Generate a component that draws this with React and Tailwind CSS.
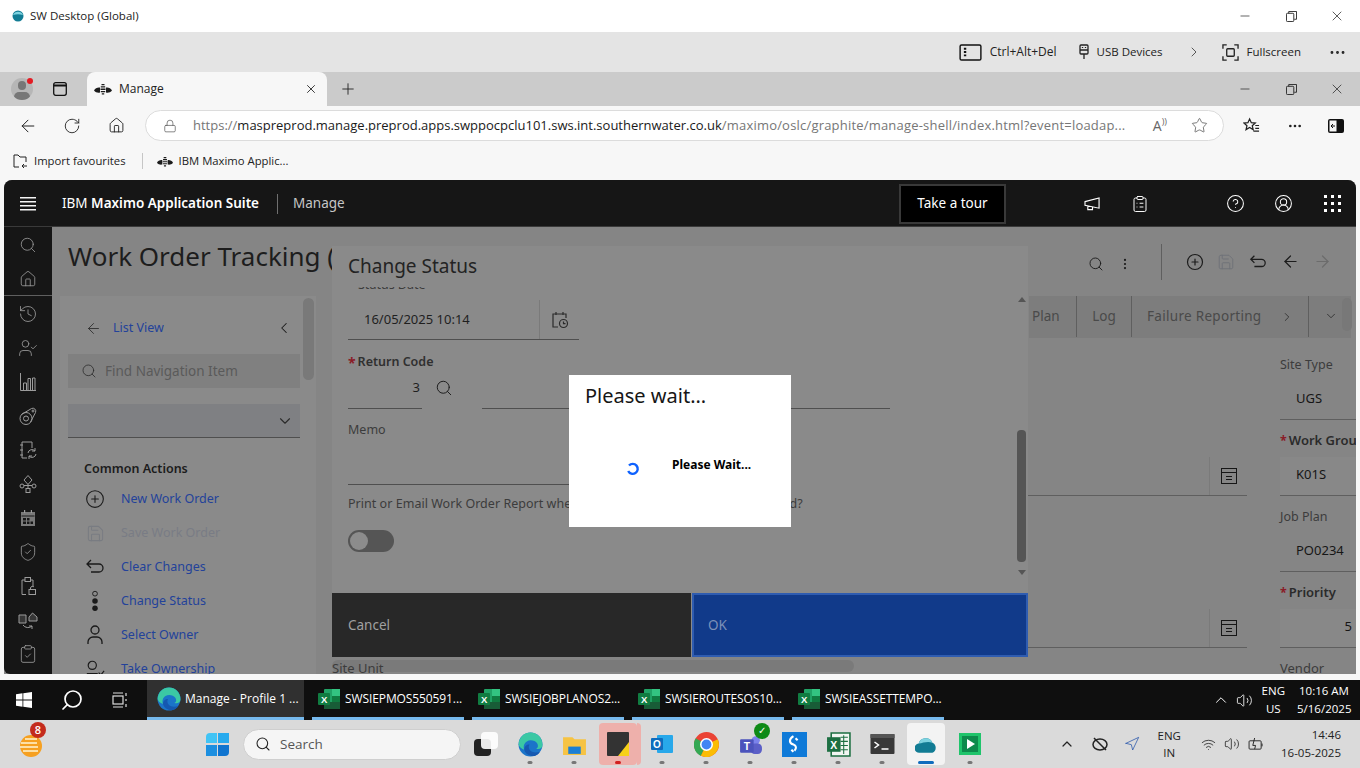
import {
  ArrowLeft, ArrowRight, ChevronDown, ChevronLeft, ChevronRight, ChevronUp, CircleHelp,
  CirclePlus, CircleUserRound, ClipboardCheck, ClipboardList, Ellipsis, EllipsisVertical,
  History, House, Lock, Minus, Navigation, Plus, RotateCw, Save, Search, ShieldCheck,
  Star, UserCheck, Volume2, Wifi, X,
} from "lucide-react";

const UI = "font-['Noto_Sans',sans-serif]";
const SEGOE = "font-['Open_Sans',sans-serif]";

const SIDE_ICONS = [History, UserCheck, BarsIcon, TargetIcon, SyncIcon, TreeIcon, CalIcon, ShieldCheck, ClipLockIcon, SwapIcon, ClipboardCheck];

const ACTIONS = [
  { label: "New Work Order", Icon: CirclePlus, size: 20 },
  { label: "Save Work Order", Icon: Save, size: 19, off: true },
  { label: "Clear Changes", Icon: UndoLong, size: 20 },
  { label: "Change Status", Icon: DotsStatus, size: 22 },
  { label: "Select Owner", Icon: OwnerIcon, size: 22 },
  { label: "Take Ownership", Icon: TakeIcon, size: 22 },
];

const EXCEL_ITEMS = ["SWSIEPMOS550591...", "SWSIEJOBPLANOS2...", "SWSIEROUTESOS10...", "SWSIEASSETTEMPO..."];

function BarsIcon(p) {
  return (
    <svg viewBox="0 0 20 20" fill="none" stroke="currentColor" strokeWidth="1" {...p}>
      <path d="M2.500 1v17.500H18M5.500 18v-7h3v7M10 18V6.500h2.500V18M14.500 18V6H17v12" />
    </svg>
  );
}
function TargetIcon(p) {
  return (
    <svg viewBox="0 0 20 20" fill="none" stroke="currentColor" strokeWidth="1" {...p}>
      <circle cx="8" cy="12.500" r="6" /><circle cx="8" cy="12.500" r="2.500" />
      <path d="M3.500 8.500L13.500 2.500a3 3 0 0 1 4 4L12.500 16" /><circle cx="15" cy="5" r="1" />
    </svg>
  );
}
function SyncIcon(p) {
  return (
    <svg viewBox="0 0 20 20" fill="none" stroke="currentColor" strokeWidth="1" {...p}>
      <path d="M9 18H4V2h10v6M2 5h3M2 10h3M2 15h3" /><path d="M10 13a4 4 0 0 1 7-2M18 14a4 4 0 0 1-7 2M17 8v3h-3M11 19v-3h3" />
    </svg>
  );
}
function TreeIcon(p) {
  return (
    <svg viewBox="0 0 20 20" fill="none" stroke="currentColor" strokeWidth="1" {...p}>
      <path d="M10 1.500L14 6l-4 4.500L6 6zM10 10.500v4" /><circle cx="4" cy="12" r="2" /><circle cx="16" cy="12" r="2" /><rect x="8" y="14.500" width="4" height="4" /><path d="M6 11.500h8" />
    </svg>
  );
}
function CalIcon(p) {
  return (
    <svg viewBox="0 0 20 20" fill="currentColor" {...p}>
      <path d="M3 4h14v14H3z" fillOpacity=".75" /><path d="M6 2h1.200v3H6zM12.800 2h1.200v3h-1.200z" />
      <path d="M3.500 7.500h13v1h-13zM5 10h3v2.500H5zM9 10h2.500v2.500H9zM5 13.500h3V16H5zM9 13.500h2.500V16H9zM12.500 13.500H15V16h-2.500z" fill="#161616" />
    </svg>
  );
}
function ClipLockIcon(p) {
  return (
    <svg viewBox="0 0 20 20" fill="none" stroke="currentColor" strokeWidth="1" {...p}>
      <path d="M8 18.500H4V4h3M12.500 4H15v6" /><rect x="7" y="1.500" width="5.500" height="4" />
      <rect x="11" y="13.500" width="6.500" height="5" /><path d="M12.500 13.500V12a2 2 0 0 1 3.500-1" />
    </svg>
  );
}
function SwapIcon(p) {
  return (
    <svg viewBox="0 0 20 20" fill="none" stroke="currentColor" strokeWidth="1" {...p}>
      <path d="M11 7l3.500-4L19 7v4h-8zM1 5h7v8H1z" fill="currentColor" fillOpacity=".25" /><path d="M5 15a6 6 0 0 0 9 1M14 19v-3h-3" />
    </svg>
  );
}
function UndoLong(p) {
  return (
    <svg viewBox="0 0 20 20" fill="none" stroke="currentColor" strokeWidth="1.400" {...p}>
      <path d="M6 3L2 7l4 4M2 7h12a4 4 0 0 1 0 8H6" />
    </svg>
  );
}
function DotsStatus(p) {
  return (
    <svg viewBox="0 0 20 24" {...p}>
      <circle cx="10" cy="4" r="2.600" fill="none" stroke="currentColor" strokeWidth="1" />
      <circle cx="10" cy="12" r="3" fill="currentColor" />
      <circle cx="10" cy="20" r="3" fill="currentColor" />
    </svg>
  );
}
function OwnerIcon(p) {
  return (
    <svg viewBox="0 0 20 20" fill="none" stroke="currentColor" strokeWidth="1.400" {...p}>
      <circle cx="10" cy="5" r="4" /><path d="M3 19v-2a5 5 0 0 1 5-5h4a5 5 0 0 1 5 5v2" />
    </svg>
  );
}
function TakeIcon(p) {
  return (
    <svg viewBox="0 0 22 20" fill="none" stroke="currentColor" strokeWidth="1.300" {...p}>
      <circle cx="8" cy="6" r="4.500" /><path d="M2 15h12M15 14l2.500 2.500L21 12" />
    </svg>
  );
}
function Bee({ className }) {
  return (
    <svg viewBox="0 0 18 12" className={className} fill="#1c1c1c">
      <path d="M0 7.500C1 5 4 4 6 4.500v5C4 10 1.500 9.500 0 7.500zM18 7.500C17 5 14 4 12 4.500v5c2 .5 4.500 0 6-2z" />
      <path d="M7.500 1h3v1.300h-3zM6.800 3.300h4.400v1.300H6.800zM6.500 5.600h5v1.300h-5zM6.800 7.900h4.400v1.300H6.800zM7.800 10.200h2.400v1.300H7.800z" />
    </svg>
  );
}
function ArchiveIcon() {
  return (
    <svg viewBox="0 0 16 16" className="w-4 h-4" fill="none" stroke="#161616" strokeWidth="1">
      <rect x=".5" y=".5" width="15" height="15" /><path d="M.5 4.500h15M5 8.500h6M5 11.500h6" />
    </svg>
  );
}
function CalClock() {
  return (
    <svg viewBox="0 0 18 18" className="w-[18px] h-[18px]" fill="none" stroke="#2b2b2b" strokeWidth="1.200">
      <path d="M7 16H2V3h13v4M5 1v3M12 1v3" /><circle cx="12.500" cy="12.500" r="4" /><path d="M12.500 10.500v2.200h2" />
    </svg>
  );
}
function ExcelIcon({ className = "w-6 h-6" }) {
  return (
    <svg viewBox="0 0 24 24" className={className}>
      <rect x="7" y="2" width="16" height="20" rx="1" fill="#21a366" />
      <rect x="15" y="2" width="8" height="7" fill="#33c481" />
      <rect x="15" y="9" width="8" height="6" fill="#107c41" />
      <rect x="7" y="15" width="16" height="7" fill="#185c37" />
      <rect x="1" y="6" width="12" height="12" rx="1" fill="#107c41" />
      <text x="7" y="15.500" textAnchor="middle" fontSize="9.500" fontWeight="700" fill="#fff" fontFamily="Liberation Sans">X</text>
    </svg>
  );
}
function EdgeIcon({ className = "w-6 h-6" }) {
  return (
    <svg viewBox="0 0 24 24" className={className}>
      <circle cx="12" cy="12" r="11.500" fill="#1b74c9" />
      <path d="M.6 12C1 5 6 .5 12 .5S23.500 5 23.500 12.500c0 3-3 4.500-6 3.500 2-1 2-3 1-5-2-3-7-4-10-2S5 14 6 17C3 16 1 14 .6 12z" fill="#3bc8a4" />
      <path d="M6 17c1 4 5 6.500 10 6 2-.5 4-2 5-4-3 1-7 1-9-1s-2-4-1-6c-3 0-5 2-5 5z" fill="#1558b0" />
    </svg>
  );
}
function WinControls({ className }) {
  return (
    <div className={`flex items-center text-[#222] ${className}`}>
      <Minus size={14} strokeWidth={1.2} className="mr-[34px]" />
      <svg viewBox="0 0 12 12" className="w-[11px] h-[11px] mr-[32px]" fill="none" stroke="#222" strokeWidth="1">
        <rect x=".5" y="2.500" width="8" height="9" rx="1" /><path d="M3 2.500V.5h8.500V9H9" />
      </svg>
      <X size={16} strokeWidth={1.1} />
    </div>
  );
}
function TaskIcon({ children, dot, className = "" }) {
  return (
    <div className={`relative w-[38px] h-[42px] flex items-center justify-center rounded ${className}`}>
      {children}
      {dot && <span className={`absolute bottom-[1px] left-1/2 -translate-x-1/2 rounded-full ${dot}`} />}
    </div>
  );
}
const GREY_DOT = "w-[5px] h-[3px] bg-[#777]";

function FormField({ label, value, req, right, light }) {
  return (
    <div className="h-[76px] flex flex-col shrink-0">
      <div className="h-[37px] pt-[5px] flex items-center text-[12.5px] text-[#3c3c3c] whitespace-nowrap">
        {req && <span className="text-[#8a1c28] mr-[2px] font-bold">*</span>}
        <span className={req ? "font-semibold text-[13px] text-[#2b2b2b]" : ""}>{label}</span>
      </div>
      <div className={`h-[39px] border-b border-[#5f5f5f] flex items-center text-[13px] text-[#161616] ${light ? "bg-[#888888]" : ""} ${right ? "justify-end pr-[4px] pb-[2px]" : "pl-[16px] pb-[2px]"}`}>
        {value}
      </div>
    </div>
  );
}

function LookupLine() {
  return (
    <div className="h-[76px] flex flex-col justify-end">
      <div className="h-[39px] border-b border-[#5f5f5f] flex justify-end">
        <div className="w-[38px] border-l border-[#7a7a7a] flex items-center justify-center"><ArchiveIcon /></div>
      </div>
    </div>
  );
}

function Header() {
  return (
    <div className={`${UI} h-[47px] bg-[#161616] border-b border-[#3a3a3a] flex items-center text-white shrink-0 relative pt-[1px]`}>
      <div className="w-[48px] flex justify-center">
        <svg viewBox="0 0 16 14" className="w-4 h-[14px]" fill="#f4f4f4"><path d="M0 0h16v1.500H0zM0 4h16v1.500H0zM0 8h16v1.500H0zM0 12h16v1.500H0z" /></svg>
      </div>
      <div className="ml-[10px] text-[13.5px] w-[215px] whitespace-nowrap">IBM <span className="font-semibold">Maximo Application Suite</span></div>
      <div className="w-px h-5 bg-[#6f6f6f]" />
      <div className="ml-[15px] text-[13.5px] text-[#c6c6c6]">Manage</div>
      <div className="ml-auto flex items-center">
        <div className="w-[107px] h-10 bg-black border-2 border-[#393939] flex items-center justify-center text-[13.5px] mr-[78px]">Take a tour</div>
        <svg viewBox="0 0 18 16" className="w-[17px] h-[15px] mr-[30px]" fill="none" stroke="#fff" strokeWidth="1.200">
          <path d="M1 6l15-4v11L1 10zM4 11v3.500h5V12" />
        </svg>
        <ClipboardList size={18} strokeWidth={1.3} className="mr-[77px]" />
        <CircleHelp size={19} strokeWidth={1.3} className="mr-[29px]" />
        <CircleUserRound size={19} strokeWidth={1.3} className="mr-[31px]" />
        <div className="grid grid-cols-3 gap-[4px] mr-[15px]">
          {Array.from({ length: 9 }).map((_, i) => <span key={i} className="w-[3px] h-[3px] bg-white" />)}
        </div>
      </div>
    </div>
  );
}

function Sidebar() {
  return (
    <div className="w-[48px] shrink-0 bg-[#161616] text-[#9c9c9c] flex flex-col items-center overflow-hidden rounded-bl-md">
      <div className="w-full h-[69px] border-b border-[#5f5f5f] flex flex-col items-center pt-[9px] gap-[16px] shrink-0">
        <Search size={18} strokeWidth={1.1} />
        <House size={18} strokeWidth={1.1} />
      </div>
      <div className="flex flex-col items-center gap-[14px] pt-[8px]">
        {SIDE_ICONS.map((Ic, i) => <Ic key={i} width={20} height={20} size={20} strokeWidth={1} />)}
      </div>
    </div>
  );
}

function NavPanel() {
  return (
    <div className="w-[256px] ml-[8px] bg-[#8a8a8a] shrink-0 relative overflow-hidden pl-[8px] pr-[16px]">
      <div className="absolute right-[2px] top-[2px] w-[11px] h-[82px] rounded-md bg-[#797979]" />
      <div className="h-[58px] pt-[6px] flex items-center pl-[17px] text-[#23429a] text-[12.5px]">
        <ArrowLeft size={17} strokeWidth={1.2} className="text-[#2b2b2b] mr-[11px]" />
        List View
        <ChevronLeft size={18} strokeWidth={1.4} className="text-[#1c1c1c] ml-auto mr-[7px]" />
      </div>
      <div className="h-[34px] bg-[#808080] flex items-center pl-[13px] text-[#5a5a5a] text-[13.5px]">
        <Search size={16} strokeWidth={1.2} className="text-[#2b2b2b] mr-[8px]" />
        Find Navigation Item
      </div>
      <div className="h-[34px] mt-[16px] bg-[#7f8083] border-b border-[#4f4f4f] flex items-center justify-end pr-[6px]">
        <ChevronDown size={18} strokeWidth={1.5} className="text-[#2b2b2b]" />
      </div>
      <div className="pt-[22px] pl-[16px] text-[12.5px] font-semibold text-[#1c1c1c] h-[44px]">Common Actions</div>
      <div className="flex flex-col pl-[17px]">
        {ACTIONS.map(({ label, Icon, size, off }) => (
          <div key={label} className="h-[34px] flex items-center shrink-0">
            <div className={`w-[20px] flex justify-center mr-[16px] ${off ? "text-[#797c82]" : "text-[#1a1a1a]"}`}>
              <Icon width={size} height={size} size={size} strokeWidth={1.3} />
            </div>
            <span className={`text-[12.5px] whitespace-nowrap ${off ? "text-[#797c85]" : "text-[#23429a]"}`}>{label}</span>
          </div>
        ))}
      </div>
    </div>
  );
}

function WorkArea() {
  return (
    <div className="flex-1 min-w-0 flex flex-col overflow-hidden">
      <div className="h-[42px] shrink-0 flex justify-end pr-[5px] relative">
        <div className="flex items-stretch bg-[#7d7d7d] text-[#4a4a4a] text-[13.5px] pb-[1px]">
          <div className="w-[48px] border-r border-[#5f5f5f] flex items-center pl-[3px]">Plan</div>
          <div className="w-[55px] border-r border-[#5f5f5f] flex items-center justify-center">Log</div>
          <div className="w-[177px] border-r border-[#5f5f5f] flex items-center pl-[15px] tracking-[.3px] whitespace-nowrap">
            Failure Reporting
            <ChevronRight size={14} strokeWidth={1.3} className="ml-auto mr-[14px] text-[#222]" />
          </div>
          <div className="w-[42px] flex items-start pt-[13px] pl-[15px]">
            <ChevronDown size={14} strokeWidth={1.3} className="text-[#222]" />
          </div>
        </div>
        <div className="absolute right-[4px] top-[2px] w-[10px] h-[33px] rounded-md bg-[#787878]" />
      </div>
      <div className="flex pl-[16px] pt-[6px]">
        <div className="w-[915px] shrink-0 flex flex-col">
          <div className="h-[76px]" />
          <LookupLine />
          <div className="h-[76px]" />
          <LookupLine />
          <div className="relative z-10 text-[13px] text-[#3c3c3c] pt-[11px]">Site Unit</div>
        </div>
        <div className="ml-[33px] w-[76px] shrink-0 flex flex-col">
          <FormField label="Site Type" value="UGS" />
          <FormField label="Work Group" value="K01S" req light />
          <FormField label="Job Plan" value="PO0234" />
          <FormField label="Priority" value="5" req right light />
          <div className="text-[13px] text-[#3c3c3c] pt-[11px]">Vendor</div>
        </div>
      </div>
    </div>
  );
}

function ChangeStatusModal() {
  return (
    <div className="absolute left-[328px] top-[19px] w-[696px] h-[411px] bg-[#8a8a8a] flex flex-col">
      <div className="h-[41px] shrink-0 pl-4 flex items-center text-[19px] text-[#232323] relative z-10 bg-[#8a8a8a]">Change Status</div>
      <div className="flex-1 min-h-0 overflow-hidden relative pl-4">
        <div className="text-[12.5px] text-[#3c3c3c] -mt-[11px] h-[24px] ml-[10px]">Status Date</div>
        <div className="w-[231px] h-[40px] border-b border-[#4f4f4f] flex items-center">
          <div className="w-[192px] h-full border-r border-[#7a7a7a] pl-4 flex items-center text-[13px] text-[#1f1f1f]">16/05/2025 10:14</div>
          <div className="flex-1 flex justify-center"><CalClock /></div>
        </div>
        <div className="mt-[12px] text-[12.5px] font-semibold text-[#303030] h-[20px] flex items-center">
          <span className="text-[#8a1c28] mr-[2px] text-[14px] font-bold">*</span>Return Code
        </div>
        <div className="flex h-[37px]">
          <div className="w-[74px] border-b border-[#4f4f4f] flex items-center justify-end pr-[2px] pb-[5px] text-[13px] text-[#1f1f1f]">3</div>
          <div className="w-[60px] flex items-center pl-[13px] pb-[5px]"><Search size={18} strokeWidth={1.3} className="text-[#1c1c1c]" /></div>
          <div className="w-[408px] border-b border-[#4f4f4f]" />
        </div>
        <div className="mt-[12px] text-[12.5px] text-[#3c3c3c] h-[64px] w-[400px] border-b border-[#4f4f4f]">Memo</div>
        <div className="mt-[10px] text-[12.5px] text-[#3c3c3c] whitespace-nowrap tracking-[.03px]">Print or Email Work Order Report when Work Order Status is Set to Changed?</div>
        <div className="mt-[16px] w-[46px] h-[22px] rounded-full bg-[#555] p-[2px]">
          <div className="w-[18px] h-[18px] rounded-full bg-[#8c8c8c]" />
        </div>
        {/* modal scrollbar */}
        <div className="absolute right-[2px] top-0 bottom-0 w-[9px] flex flex-col items-center">
          <span className="mt-[10px] w-0 h-0 border-x-[4px] border-x-transparent border-b-[5px] border-b-[#555]" />
          <div className="mt-[128px] w-[9px] h-[132px] rounded bg-[#555]" />
          <span className="mt-[8px] w-0 h-0 border-x-[4px] border-x-transparent border-t-[5px] border-t-[#555]" />
        </div>
      </div>
      <div className="h-[64px] shrink-0 flex">
        <div className="w-[359px] bg-[#282828] text-[#a0a0a0] text-[13.5px] flex items-center pl-4 mr-[1px]">Cancel</div>
        <div className="flex-1 bg-[#113a8a] border-2 border-[#2f5cb0] text-[#7d90b8] text-[13.5px] flex items-center pl-[14px]">OK</div>
      </div>
    </div>
  );
}

function WaitDialog() {
  return (
    <div className="absolute left-[565px] top-[148px] w-[222px] h-[152px] bg-white">
      <div className="pl-4 pt-[9px] text-[20px] leading-6 text-[#161616]">Please wait...</div>
      <div className="flex mt-[49px]">
        <svg viewBox="0 0 14 14" className="ml-[57px] mt-[5px] w-[14px] h-[14px]" fill="none" stroke="#0f62fe" strokeWidth="2.400">
          <path d="M3 3.500A5 5 0 1 1 2.200 9" />
        </svg>
        <div className="ml-[32px] text-[12px] font-bold text-black leading-4">Please Wait...</div>
      </div>
    </div>
  );
}

function MainApp() {
  return (
    <div className="h-[494px] mx-[4px] rounded-t-lg overflow-hidden flex flex-col bg-[#858585] shrink-0">
      <Header />
      <div className={`${UI} flex-1 min-h-0 flex relative overflow-hidden`}>
        <Sidebar />
        <div className="flex-1 min-w-0 flex flex-col">
          <div className="h-[69px] shrink-0 flex items-center pl-[16px] text-[#1d1d1d]">
            <span className="text-[26px] whitespace-nowrap pb-[10px]">Work Order Tracking (</span>
            <div className="ml-auto flex items-center text-[#1c1c1c] h-[36px]">
              <Search size={16} strokeWidth={1.4} className="mr-[14px] mt-[4px]" />
              <EllipsisVertical size={14} strokeWidth={1.8} className="mr-[29px] mt-[4px]" />
              <div className="w-px h-[36px] bg-[#5f5f5f] mr-[24px]" />
              <CirclePlus size={18} strokeWidth={1.6} className="mr-[13px]" />
              <Save size={18} strokeWidth={1.3} className="mr-[14px] text-[#6f7278]" />
              <UndoLong width={18} height={18} className="mr-[14px]" />
              <ArrowLeft size={19} strokeWidth={1.5} className="mr-[13px]" />
              <ArrowRight size={19} strokeWidth={1.5} className="mr-[24px] text-[#6c6c6c]" />
            </div>
          </div>
          <div className="flex-1 min-h-0 flex">
            <NavPanel />
            <WorkArea />
          </div>
        </div>
        <div className="absolute left-[328px] right-[502px] bottom-[2px] h-[12px] rounded-md bg-[#7a7a7a]" />
        <ChangeStatusModal />
        <WaitDialog />
      </div>
    </div>
  );
}

function RemoteTaskbar() {
  return (
    <div className={`${SEGOE} h-[40px] bg-[#0f0f0f] flex items-stretch text-white shrink-0`}>
      <div className="w-[48px] flex items-center justify-center">
        <svg viewBox="0 0 16 16" className="w-4 h-4" fill="#fff"><path d="M0 2.200l6.500-.9v6.300H0zM7.300 1.200L16 0v7.600H7.300zM0 8.400h6.500v6.300L0 13.800zM7.300 8.400H16V16l-8.700-1.200z" /></svg>
      </div>
      <div className="w-[48px] flex items-center justify-center"><Search size={24} strokeWidth={1.7} className="-scale-x-100" /></div>
      <div className="w-[48px] flex items-center justify-center">
        <svg viewBox="0 0 18 18" className="w-[18px] h-[18px]" fill="none" stroke="#ddd" strokeWidth="1.200"><rect x="2" y="5" width="10" height="8" /><path d="M2 2h10M2 16h10M15 2v3M15 8v2M15 13v3" /></svg>
      </div>
      <div className="ml-[3px] w-[157px] bg-[#303030] border-b-[3px] border-[#76b9ed] flex items-center pl-[10px] text-[12px] pt-[1px]">
        <EdgeIcon /><span className="ml-[4px] whitespace-nowrap">Manage - Profile 1 ...</span>
      </div>
      {EXCEL_ITEMS.map((t) => (
        <div key={t} className="ml-[8px] w-[152px] border-b-[3px] border-[#76b9ed] flex items-center pl-[5px] text-[12px] tracking-[-.1px] pt-[1px]">
          <ExcelIcon /><span className="ml-[4px] whitespace-nowrap">{t}</span>
        </div>
      ))}
      <div className="ml-auto flex items-center pr-[9px]">
        <ChevronUp size={18} strokeWidth={1.3} className="mr-[6px]" />
        <Volume2 size={17} strokeWidth={1.2} className="mr-[9px]" />
        <div className="text-[11.5px] leading-[18px] text-center mr-[12px]">ENG<br />US</div>
        <div className="text-[11.5px] leading-[18px] text-center w-[54px]">10:16 AM<br />5/16/2025</div>
      </div>
    </div>
  );
}

function LocalTaskbar() {
  return (
    <div className={`${SEGOE} h-[48px] bg-[#dadada] flex items-center shrink-0 relative text-[#222]`}>
      <div className="ml-[20px] relative w-[24px] h-[26px]">
        <svg viewBox="0 0 22 26" className="absolute left-0 top-[3px] w-[22px] h-[26px]"><circle cx="11" cy="12" r="11" fill="#f6a020" /><path d="M1 9h16M0 13h18M3 17h15M5 5h12" stroke="#fff3d0" strokeWidth="1.300" /></svg>
        <span className="absolute -top-[9px] left-[10px] w-[16px] h-[16px] rounded-full bg-[#c42b1c] text-white text-[11px] font-semibold flex items-center justify-center">8</span>
      </div>
      <div className="ml-[162px] w-[23px] h-[23px] grid grid-cols-2 gap-[1.5px]">
        <span className="bg-[#41c4f5] rounded-tl-sm" /><span className="bg-[#27aaee]" /><span className="bg-[#1c8fe0]" /><span className="bg-[#0f74cf] rounded-br-sm" />
      </div>
      <div className="ml-[14px] w-[218px] h-[31px] rounded-full bg-[#f5f5f5] border border-[#cfcfcf] flex items-center pl-[11px] text-[13.5px] text-[#555]">
        <Search size={16} strokeWidth={1.6} className="text-[#222] mr-[9px]" />Search
      </div>
      <div className="ml-[6px] flex items-center gap-[6px]">
        <TaskIcon>
          <div className="relative w-[24px] h-[24px]">
            <span className="absolute left-0 bottom-0 w-[17px] h-[17px] bg-[#222] rounded-sm" />
            <span className="absolute right-0 top-0 w-[17px] h-[17px] bg-white/90 rounded-sm" />
          </div>
        </TaskIcon>
        <TaskIcon dot={GREY_DOT}><EdgeIcon className="w-[25px] h-[25px]" /></TaskIcon>
        <TaskIcon dot={GREY_DOT}>
          <svg viewBox="0 0 24 24" className="w-[25px] h-[25px]"><path d="M1 5h9l2 2h11v15H1z" fill="#f6c343" /><rect x="6" y="14" width="12" height="7" fill="#1b7fd4" /></svg>
        </TaskIcon>
        <TaskIcon className="bg-[#eeb0ab]" dot="w-[6px] h-[3px] bg-[#d12020]">
          <svg viewBox="0 0 22 24" className="w-[22px] h-[24px]"><rect width="22" height="24" rx="1" fill="#333" /><path d="M22 10v14H11z" fill="#f7d117" /></svg>
          <span className="absolute right-[-4px] top-0 bottom-0 w-[4px] bg-[#eeb0ab] rounded-r" />
        </TaskIcon>
        <TaskIcon dot={GREY_DOT}>
          <svg viewBox="0 0 24 24" className="w-6 h-6"><rect x="7" y="3" width="16" height="18" rx="1" fill="#28a8ea" /><rect x="1" y="6" width="12" height="12" rx="1" fill="#0f6cbd" /><text x="7" y="15.500" textAnchor="middle" fontSize="10" fontWeight="700" fill="#fff" fontFamily="Liberation Sans">O</text></svg>
        </TaskIcon>
        <TaskIcon dot={GREY_DOT}>
          <svg viewBox="0 0 24 24" className="w-[25px] h-[25px]"><circle cx="12" cy="12" r="12" fill="#ea4335" /><path d="M12 12L1.600 6a12 12 0 0 0 5 17z" fill="#34a853" /><path d="M12 12l10.800-5A12 12 0 0 1 6.600 22.800z" fill="#fbbc04" /><circle cx="12" cy="12" r="5.500" fill="#4285f4" stroke="#fff" strokeWidth="1.500" /></svg>
        </TaskIcon>
        <TaskIcon dot={GREY_DOT}>
          <div className="relative">
            <svg viewBox="0 0 24 24" className="w-[25px] h-[25px]"><circle cx="17" cy="8" r="4" fill="#7b83eb" /><rect x="12" y="11" width="11" height="10" rx="4" fill="#5b5fc7" /><rect x="2" y="7" width="13" height="13" rx="1" fill="#4b53bc" /><text x="8.500" y="17" textAnchor="middle" fontSize="10" fontWeight="700" fill="#fff" fontFamily="Liberation Sans">T</text></svg>
            <span className="absolute -top-[9px] right-[-7px] w-4 h-4 rounded-full bg-[#0e8a16] text-white text-[10px] flex items-center justify-center">✓</span>
          </div>
        </TaskIcon>
        <TaskIcon dot={GREY_DOT}>
          <svg viewBox="0 0 24 24" className="w-[25px] h-[25px]"><rect width="24" height="24" fill="#0f7ad8" /><path d="M11 4C6 7 7 11 11 12c3 1 3 4 1 6M13 6l2 2M9 17l2 2" stroke="#fff" strokeWidth="2" fill="none" /></svg>
        </TaskIcon>
        <TaskIcon dot={GREY_DOT}>
          <svg viewBox="0 0 24 24" className="w-[25px] h-[25px]"><path d="M5 1h18v22H5z" fill="#f2f6f2" stroke="#1d6f42" strokeWidth="1.500" /><path d="M14 5h7M14 9h7M14 13h7M14 17h7M17 3v18" stroke="#1d6f42" /><rect x="1" y="5" width="13" height="14" fill="#1d6f42" /><text x="7.500" y="16" textAnchor="middle" fontSize="10" fontWeight="700" fill="#fff" fontFamily="Liberation Sans">X</text></svg>
        </TaskIcon>
        <TaskIcon dot={GREY_DOT}>
          <svg viewBox="0 0 24 20" className="w-[25px] h-[20px]"><rect width="24" height="20" rx="1" fill="#383838" /><rect width="24" height="4" fill="#555" /><path d="M4 8l4 3-4 3" stroke="#fff" strokeWidth="1.500" fill="none" /><path d="M11 15h7" stroke="#fff" strokeWidth="1.500" /></svg>
        </TaskIcon>
        <TaskIcon className="bg-[#f3f3f3]" dot="w-[16px] h-[3px] bg-[#0f6cbd]">
          <svg viewBox="0 0 24 18" className="w-[22px] h-[17px]"><path d="M5 18a5 5 0 0 1-1-10 8 8 0 0 1 15-1 6 6 0 0 1 0 11z" fill="#127c94" /><path d="M4 8a8 8 0 0 1 15-1c-5-2-10 0-15 1z" fill="#7ed3e0" /></svg>
        </TaskIcon>
        <TaskIcon dot={GREY_DOT}>
          <svg viewBox="0 0 24 24" className="w-6 h-6"><rect x="1" y="1" width="22" height="22" fill="#1fc46b" /><rect x="4" y="4" width="16" height="16" fill="#0d8a4c" /><path d="M9 7l8 5-8 5z" fill="#fff" /></svg>
        </TaskIcon>
      </div>
      <div className="ml-auto flex items-center pr-[19px]">
        <ChevronUp size={16} strokeWidth={1.8} className="mr-[17px]" />
        <svg viewBox="0 0 16 16" className="w-4 h-4 mr-[16px]" fill="none" stroke="#222" strokeWidth="1.500">
          <ellipse cx="8" cy="8.500" rx="7" ry="5.500" /><path d="M2 2l12 12" />
        </svg>
        <Navigation size={16} strokeWidth={1.1} className="mr-[18px] text-[#1f4fa8]" />
        <div className="text-[11.5px] leading-[17px] text-center mr-[20px]">ENG<br />IN</div>
        <Wifi size={15} strokeWidth={1.3} className="mr-[8px]" />
        <Volume2 size={16} strokeWidth={1.2} className="mr-[8px]" />
        <svg viewBox="0 0 18 14" className="w-[17px] h-[13px] mr-[16px]" fill="none" stroke="#222"><rect x="1" y="3" width="13" height="9" rx="1" /><path d="M15 6v3M7 0L5 8h3l-1 4" /></svg>
        <div className="text-[11.5px] leading-[18px] text-right">14:46<br />16-05-2025</div>
      </div>
    </div>
  );
}

export default function App() {
  return (
    <div className={`${SEGOE} w-[1360px] h-[768px] overflow-hidden flex flex-col bg-[#f7f7f7]`}>
      {/* citrix title bar */}
      <div className="h-[32px] bg-white flex items-center shrink-0">
        <svg viewBox="0 0 14 12" className="w-[14px] h-[12px] ml-[11px]"><circle cx="7" cy="6" r="5.500" fill="#127c94" /><path d="M2 5a5.500 5.500 0 0 1 10 0c-3-1-7-1-10 0z" fill="#7ed3e0" /></svg>
        <span className="ml-[5px] text-[11.5px] text-[#222]">SW Desktop (Global)</span>
        <WinControls className="ml-auto mr-[15px]" />
      </div>
      <div className="h-[40px] bg-[#e4e4e4] flex items-center justify-end text-[11.5px] text-[#222] shrink-0">
        <svg viewBox="0 0 24 18" className="w-[23px] h-[17px] mr-[8px]" fill="none" stroke="#111" strokeWidth="1.500"><rect x="1" y="1" width="22" height="16" rx="1.500" /><path d="M5 5h2.500M5 8.500h2.500M5 12h2.500" strokeWidth="2" /></svg>
        <span className="mr-[22px] text-[12px]">Ctrl+Alt+Del</span>
        <svg viewBox="0 0 10 16" className="w-[10px] h-[16px] mr-[8px]" fill="none" stroke="#222" strokeWidth="1.300">
          <rect x="1" y="1" width="8" height="9" rx="1" /><path d="M1 6h8M3.500 3v1M6.500 3v1M5 10v5" />
        </svg>
        <span className="mr-[23px]">USB Devices</span>
        <ChevronRight size={16} strokeWidth={1.1} className="mr-[20px]" />
        <svg viewBox="0 0 18 18" className="w-[17px] h-[17px] mr-[8px]" fill="none" stroke="#222" strokeWidth="1.400"><path d="M1 5V1h4M13 1h4v4M17 13v4h-4M5 17H1v-4" /><rect x="5" y="5" width="8" height="8" rx="1" /></svg>
        <span className="mr-[27px]">Fullscreen</span>
        <Ellipsis size={19} strokeWidth={1.6} className="mr-[13px]" />
      </div>
      {/* edge tab strip */}
      <div className="h-[34px] bg-[#cbcbcb] flex items-end shrink-0 relative">
        <div className="relative w-[22px] h-[22px] ml-[11px] mb-[6px] rounded-full bg-[#b6b6b6] overflow-hidden">
          <span className="absolute left-[7px] top-[3px] w-[8px] h-[9px] rounded-full bg-[#777]" />
          <span className="absolute left-[3px] top-[14px] w-[16px] h-[10px] rounded-full bg-[#777]" />
        </div>
        <span className="absolute left-[27px] top-[6px] w-[6px] h-[6px] rounded-full bg-[#e31b23]" />
        <svg viewBox="0 0 14 14" className="w-[14px] h-[14px] ml-[20px] mb-[10px]" fill="none" stroke="#111" strokeWidth="1.300"><rect x=".7" y=".7" width="12.600" height="12.600" rx="2" /><path d="M.7 3.500h12.600" strokeWidth="2" /></svg>
        <div className="ml-[20px] w-[240px] h-[34px] bg-[#f7f7f7] rounded-t-lg flex items-center pl-[7px] text-[12px] text-[#222]">
          <Bee className="w-[18px] h-[12px]" />
          <span className="ml-[7px]">Manage</span>
          <X size={14} strokeWidth={1.5} className="ml-auto mr-[9px]" />
        </div>
        <Plus size={18} strokeWidth={1.2} className="ml-[12px] mb-[8px] text-[#222]" />
        <WinControls className="ml-auto mr-[15px] mb-[9px]" />
      </div>
      {/* address row */}
      <div className="h-[39px] flex items-center shrink-0 text-[#222]">
        <ArrowLeft size={20} strokeWidth={1.2} className="ml-[18px]" />
        <RotateCw size={18} strokeWidth={1.2} className="ml-[25px]" />
        <House size={17} strokeWidth={1.3} className="ml-[27px]" />
        <div className="ml-[20px] w-[1079px] h-[31px] rounded-full bg-white border border-[#dcdcdc] flex items-center pl-[17px] text-[13px] whitespace-nowrap overflow-hidden">
          <Lock size={14} strokeWidth={1.2} className="text-[#555] mr-[16px] shrink-0" />
          <span className="text-[#767676]">https://</span><span className="text-[#1a1a1a]">maspreprod.manage.preprod.apps.swppocpclu101.sws.int.southernwater.co.uk</span>
          <span className="text-[#767676] tracking-[.2px]">/maximo/oslc/graphite/manage-shell/index.html?event=loadap...</span>
          <span className="ml-auto text-[14px] text-[#666] mr-[24px] shrink-0">A<span className="text-[9px] align-super">))</span></span>
          <Star size={17} strokeWidth={1.1} className="mr-[15px] text-[#555] shrink-0" />
        </div>
        <svg viewBox="0 0 18 18" className="w-[17px] h-[17px] ml-[19px]" fill="none" stroke="#222" strokeWidth="1.300">
          <path d="M7 2l1.800 4 4.200.4-3.200 2.800 1 4.200L7 11.200 3.200 13.400l1-4.200L1 6.400 5.200 6zM13 9h4M13 12h4M11 15h6" />
        </svg>
        <Ellipsis size={16} strokeWidth={2} className="ml-[27px]" />
        <svg viewBox="0 0 16 14" className="w-[16px] h-[14px] ml-[25px]"><rect width="16" height="14" rx="2" fill="#111" /><rect x="1.500" y="1.500" width="7" height="11" fill="#f7f7f7" /><path d="M3 7h4M3 7l2-2M3 7l2 2" stroke="#111" /></svg>
      </div>
      {/* favourites */}
      <div className="h-[35px] pb-[3px] flex items-center text-[11.3px] text-[#222] shrink-0">
        <svg viewBox="0 0 16 16" className="w-4 h-4 ml-[12px]" fill="none" stroke="#222"><path d="M7 14H2V2h4l2 2h6v5" /><path d="M15 13h-5M12 11l-2 2 2 2" /></svg>
        <span className="ml-[6px]">Import favourites</span>
        <div className="ml-[16px] w-px h-[16px] bg-[#c6c6c6]" />
        <Bee className="ml-[14px] w-[16px] h-[11px]" />
        <span className="ml-[6px]">IBM Maximo Applic...</span>
      </div>
      <MainApp />
      <div className="h-[6px] shrink-0 bg-[#f7f7f7]" />
      <RemoteTaskbar />
      <LocalTaskbar />
    </div>
  );
}
